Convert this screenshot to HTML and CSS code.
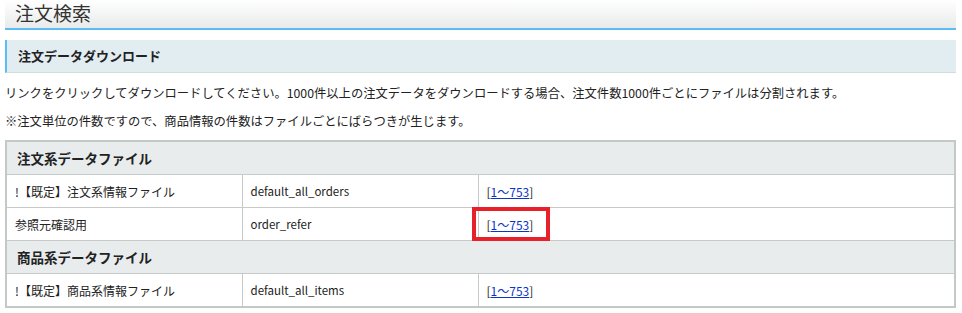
FILE: index.html
```html
<!DOCTYPE html>
<html lang="ja">
<head>
<meta charset="utf-8">
<title>注文検索</title>
<link rel="stylesheet" href="styles.css">
</head>
<body>
<div class="page">
  <h1 class="page-title">注文検索</h1>
  <h2 class="section-title">注文データダウンロード</h2>
  <div class="notes">
    <p>リンクをクリックしてダウンロードしてください。1000件以上の注文データをダウンロードする場合、注文件数1000件ごとにファイルは分割されます。</p>
    <p>※注文単位の件数ですので、商品情報の件数はファイルごとにばらつきが生じます。</p>
  </div>
  <table class="files">
    <colgroup>
      <col class="c1"><col class="c2"><col class="c3">
    </colgroup>
    <tr class="group"><th colspan="3">注文系データファイル</th></tr>
    <tr>
      <td>!【既定】注文系情報ファイル</td>
      <td class="code">default_all_orders</td>
      <td>[<a href="#">1～753</a>]</td>
    </tr>
    <tr>
      <td>参照元確認用</td>
      <td class="code">order_refer</td>
      <td class="mark-cell">[<a href="#">1～753</a>]<span class="mark"></span></td>
    </tr>
    <tr class="group"><th colspan="3">商品系データファイル</th></tr>
    <tr>
      <td>!【既定】商品系情報ファイル</td>
      <td class="code">default_all_items</td>
      <td>[<a href="#">1～753</a>]</td>
    </tr>
  </table>
</div>
</body>
</html>
```

FILE: styles.css
```css
html, body {
  margin: 0;
  padding: 0;
  background: #ffffff;
}
body {
  font-family: "Noto Sans CJK JP", "Noto Sans", sans-serif;
  color: #222222;
}
.page {
  width: 951px;
  padding: 0 6px 0 5px;
}
.page-title {
  margin: 0;
  height: 28px;
  line-height: 26px;
  padding-left: 10px;
  font-size: 19px;
  font-weight: normal;
  color: #333333;
  background: linear-gradient(#ffffff, #e9eaea);
  border-bottom: 2px solid #5cbcf5;
}
.section-title {
  margin: 10px 0 0 0;
  height: 32px;
  line-height: 31px;
  padding-left: 11px;
  font-size: 13px;
  font-weight: bold;
  color: #222222;
  background: #e2edf2;
  border-left: 2px solid #5cbcf5;
  border-bottom: 1px solid #cfdddd;
}
.notes {
  padding-top: 6px;
}
.notes p {
  margin: 0;
  line-height: 28px;
  font-size: 12.3px;
  color: #222222;
}
.files {
  margin-top: 5px;
  width: 951px;
  border-collapse: collapse;
  border: 2px solid #c3c9c7;
  font-size: 12px;
}
.files col.c1 { width: 236px; }
.files col.c2 { width: 236px; }
.files th {
  text-align: left;
  height: 32px;
  padding: 0 0 0 10px;
  font-size: 13.5px;
  font-weight: bold;
  color: #222222;
  background: #e8eced;
  border: 1px solid #c6cbca;
}
.files td {
  height: 32px;
  padding: 0 0 0 8px;
  border: 1px solid #c6cbca;
  background: #ffffff;
  color: #222222;
}
.files td.code {
  font-size: 11.5px;
}
.files a {
  color: #0b35c9;
  text-decoration: underline;
}
.mark-cell {
  position: relative;
}
.mark {
  position: absolute;
  left: -7px;
  top: -1px;
  width: 70px;
  height: 26px;
  border: 4px solid #e8202a;
}
```
